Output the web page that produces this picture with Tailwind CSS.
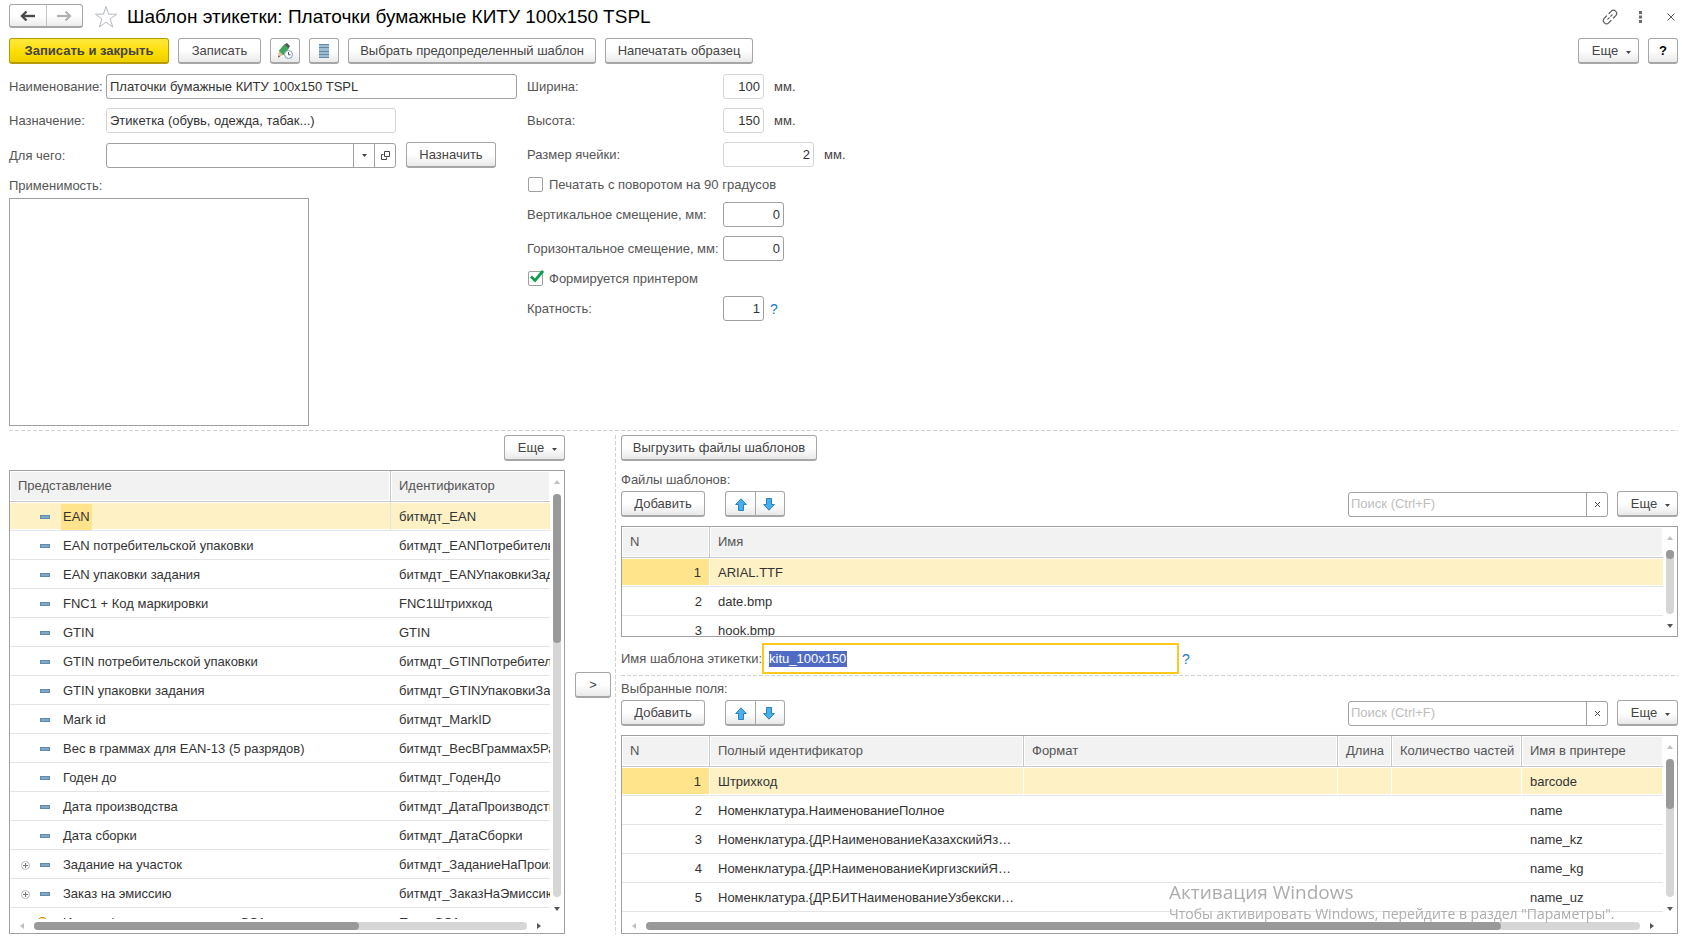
<!DOCTYPE html>
<html lang="ru">
<head>
  <meta charset="UTF-8">
  <title>Шаблон этикетки: Платочки бумажные КИТУ 100x150 TSPL</title>
  <script src="https://cdn.jsdelivr.net/npm/@tailwindcss/browser@4"></script>
</head>
<body class="bg-white text-[#333] text-[13px] leading-4 font-['Liberation_Sans',Arial,sans-serif]">
<div class="h-screen flex flex-col px-[9px] pr-[7px] pt-1 pb-[7px] overflow-hidden [&_button]:cursor-pointer [&_button]:pt-px">

  <!-- Заголовок формы -->
  <header class="flex items-center h-6">
    <div class="flex h-6 w-[74px] border border-[#a6a6a6] border-b-2 rounded-[3px] bg-linear-to-b from-white from-50% to-[#ececec]">
      <button type="button" aria-label="Назад" class="flex-1 flex items-center justify-center border-r border-[#c4c4c4]">
        <svg class="w-4 h-3" viewBox="0 0 16 12" fill="none" stroke="#4a4a4a" stroke-width="2.4"><path d="M2 6h13"/><path d="M6.500 1.500 2 6l4.500 4.500"/></svg>
      </button>
      <button type="button" aria-label="Вперед" class="flex-1 flex items-center justify-center">
        <svg class="w-4 h-3" viewBox="0 0 16 12" fill="none" stroke="#b0b0b0" stroke-width="2.2"><path d="M1 6h13"/><path d="M9.500 1.500 14 6l-4.500 4.500"/></svg>
      </button>
    </div>
    <button type="button" aria-label="В избранное" class="ml-[11px]">
      <svg class="w-6 h-6" viewBox="0 0 24 24" fill="none" stroke="#b4b9be" stroke-width="1"><path d="M12 1.500 14.600 9.200H22.600L16.200 13.900 18.700 22 12 17.200 5.300 22 7.800 13.900 1.400 9.200H9.400Z"/></svg>
    </button>
    <h1 class="ml-[9px] pt-0.5 flex-1 text-[19px] leading-6 text-black whitespace-nowrap">Шаблон этикетки: Платочки бумажные КИТУ 100x150 TSPL</h1>
    <div class="flex items-center">
      <button type="button" aria-label="Ссылка">
        <svg class="w-4 h-4" viewBox="0 0 16 16" fill="none" stroke="#5a5a5a" stroke-width="1.200" stroke-linecap="round"><path d="M7 4.500 9.600 1.900a2.600 2.600 0 0 1 3.700 0l.7.7a2.600 2.600 0 0 1 0 3.700L11.500 9"/><path d="M9 11.500 6.400 14.100a2.600 2.600 0 0 1-3.700 0l-.7-.7a2.600 2.600 0 0 1 0-3.700L4.500 7"/><path d="m5.800 10.200 1.400-1.400M8.800 7.200l1.400-1.400"/></svg>
      </button>
      <button type="button" aria-label="Меню" class="ml-[19px]">
        <svg class="w-[7px] h-3" viewBox="0 0 7 12" fill="#6a6a6a"><path d="M2 0h3v3H2zM2 4.500h3v3H2zM2 9h3v3H2z"/></svg>
      </button>
      <button type="button" aria-label="Закрыть" class="ml-[23px] mr-[3px]">
        <svg class="w-2 h-2" viewBox="0 0 8 8" stroke="#5a5a5a"><path d="m.5.5 7 7M7.500.5l-7 7"/></svg>
      </button>
    </div>
  </header>

  <!-- Командная панель -->
  <div class="mt-2.5 flex gap-[9px] [&>button]:h-[26px] [&>button]:rounded-[3px] [&>button]:border [&>button]:border-b-2 [&>button]:whitespace-nowrap [&>button]:flex [&>button]:items-center [&>button]:justify-center text-[#444]">
    <button type="button" class="w-40 border-[#b89b00] bg-linear-to-b from-[#ffe83a] via-[#ffe000] to-[#edcf00] font-bold">Записать и закрыть</button>
    <button type="button" class="w-[83px] border-[#a6a6a6] bg-linear-to-b from-white from-50% to-[#e9e9e9]">Записать</button>
    <button type="button" aria-label="Изменить" class="w-[30px] border-[#a6a6a6] bg-linear-to-b from-white from-50% to-[#e9e9e9]">
      <svg class="w-4 h-4" viewBox="0 0 16 16"><path d="M7.500 1.500 10 0l3 3-1.500 2.500Z" fill="#555"/><path d="m7.500 1.500 4 4-5.500 6.500L2 8Z" fill="#3fa65a" stroke="#2b8444" stroke-width=".6"/><path d="m2 8 4 4-5 2.500Z" fill="#e3bb96"/><path d="m1 14.500.5-2 1.500 1.200Z" fill="#444"/><circle cx="11.500" cy="11.500" r="4" fill="#fff" stroke="#7d98ad"/><path d="M11.500 9v2.800h2" fill="none" stroke="#456"/></svg>
    </button>
    <button type="button" aria-label="Список" class="w-[30px] border-[#a6a6a6] bg-linear-to-b from-white from-50% to-[#e9e9e9]">
      <svg class="w-4 h-4" viewBox="0 0 16 16"><path d="M3 1h10v14H3z" fill="#9dbdd5"/><path d="M3 1.500h10M3 4.500h10M3 8.500h10M3 11.500h10M3 14.500h10" stroke="#6489a6"/></svg>
    </button>
    <button type="button" class="w-[248px] border-[#a6a6a6] bg-linear-to-b from-white from-50% to-[#e9e9e9]">Выбрать предопределенный шаблон</button>
    <button type="button" class="w-[148px] border-[#a6a6a6] bg-linear-to-b from-white from-50% to-[#e9e9e9]">Напечатать образец</button>
    <button type="button" class="ml-auto w-[61px] pl-1.5 gap-2 border-[#a6a6a6] bg-linear-to-b from-white from-50% to-[#e9e9e9]">Еще <svg class="w-[5px] h-[3px] mt-0.5" viewBox="0 0 5 3" fill="#444"><path d="M0 0h5L2.500 3z"/></svg></button>
    <button type="button" class="w-[30px] border-[#a6a6a6] bg-linear-to-b from-white from-50% to-[#e9e9e9] font-bold text-black">?</button>
  </div>

  <!-- Реквизиты -->
  <div class="mt-2.5 flex gap-2.5 text-[#555]">
    <div class="w-[508px] flex flex-col gap-[9px]">
      <div class="flex items-center">
        <label for="name" class="w-[97px]">Наименование:</label>
        <input id="name" type="text" value="Платочки бумажные КИТУ 100x150 TSPL" class="flex-1 h-[25px] px-[3px] border border-[#a0a0a0] rounded-[3px] text-[#333]">
      </div>
      <div class="flex items-center">
        <label for="purpose" class="w-[97px]">Назначение:</label>
        <input id="purpose" type="text" readonly value="Этикетка (обувь, одежда, табак...)" class="w-[290px] h-[25px] px-[3px] border border-[#d4d4d4] rounded-[3px] text-[#333]">
      </div>
      <div class="flex items-center">
        <label for="target" class="w-[97px] pt-px">Для чего:</label>
        <div class="w-[290px] h-[25px] flex border border-[#a0a0a0] rounded-[3px]">
          <input id="target" type="text" class="flex-1 min-w-0 px-[3px] text-[#333]">
          <button type="button" aria-label="Выбрать" class="w-[21px] border-l border-[#a0a0a0] flex items-center justify-center"><svg class="w-[5px] h-[3px]" viewBox="0 0 5 3" fill="#444"><path d="M0 0h5L2.500 3z"/></svg></button>
          <button type="button" aria-label="Открыть" class="w-[21px] border-l border-[#a0a0a0] flex items-center justify-center"><svg class="w-[9px] h-[9px]" viewBox="0 0 9 9" fill="none" stroke="#444"><path d="M3.500.5h5v5h-5z"/><path d="M2.500 3.500h-2v5h5v-2"/></svg></button>
        </div>
        <button type="button" class="ml-2.5 w-[90px] h-[26px] border border-b-2 border-[#a6a6a6] rounded-[3px] bg-linear-to-b from-white from-50% to-[#e9e9e9] text-[#444]">Назначить</button>
      </div>
      <div class="flex flex-col">
        <label for="usage" class="h-[21px] pt-px">Применимость:</label>
        <textarea id="usage" class="w-[300px] h-[228px] border border-[#a0a0a0] resize-none"></textarea>
      </div>
    </div>

    <div class="flex flex-col gap-[9px]">
      <div class="flex items-center">
        <label for="width" class="w-[196px]">Ширина:</label>
        <input id="width" type="text" readonly value="100" class="w-[41px] h-[25px] px-[3px] text-right border border-[#d4d4d4] rounded-[3px] text-[#333]">
        <span class="ml-2.5 text-[#444]">мм.</span>
      </div>
      <div class="flex items-center">
        <label for="height" class="w-[196px]">Высота:</label>
        <input id="height" type="text" readonly value="150" class="w-[41px] h-[25px] px-[3px] text-right border border-[#d4d4d4] rounded-[3px] text-[#333]">
        <span class="ml-2.5 text-[#444]">мм.</span>
      </div>
      <div class="flex items-center">
        <label for="cell" class="w-[196px]">Размер ячейки:</label>
        <input id="cell" type="text" readonly value="2" class="w-[91px] h-[25px] px-[3px] text-right border border-[#d4d4d4] rounded-[3px] text-[#333]">
        <span class="ml-2.5 text-[#444]">мм.</span>
      </div>
      <label class="flex items-center h-[17px] pl-px gap-1.5">
        <input type="checkbox" class="appearance-none size-[15px] border border-[#a0a0a0] rounded-[2px]">
        Печатать с поворотом на 90 градусов
      </label>
      <div class="flex items-center">
        <label for="dy" class="w-[196px]">Вертикальное смещение, мм:</label>
        <input id="dy" type="text" value="0" class="w-[61px] h-[25px] px-[3px] text-right border border-[#a0a0a0] rounded-[3px] text-[#333]">
      </div>
      <div class="flex items-center">
        <label for="dx" class="w-[196px] whitespace-nowrap">Горизонтальное смещение, мм:</label>
        <input id="dx" type="text" value="0" class="w-[61px] h-[25px] px-[3px] text-right border border-[#a0a0a0] rounded-[3px] text-[#333]">
      </div>
      <label class="relative flex items-center h-[17px] pl-px gap-1.5">
        <input type="checkbox" checked class="peer appearance-none size-[15px] border border-[#a0a0a0] rounded-[2px]">
        <svg class="hidden peer-checked:block absolute left-[3px] top-0 w-[14px] h-[13px]" viewBox="0 0 14 13" fill="none" stroke="#0f9d4c" stroke-width="2.800"><path d="m1 6.500 4 4L13 1"/></svg>
        Формируется принтером
      </label>
      <div class="flex items-center">
        <label for="ratio" class="w-[196px]">Кратность:</label>
        <input id="ratio" type="text" value="1" class="w-[41px] h-[25px] px-[3px] text-right border border-[#a0a0a0] rounded-[3px] text-[#333]">
        <a href="#" class="ml-1.5 text-sm text-[#1a7bbf]">?</a>
      </div>
    </div>
  </div>

  <div class="mt-1 h-px shrink-0 bg-[repeating-linear-gradient(90deg,#d2d2d2_0_4px,transparent_4px_6px)]"></div>

  <div class="mt-1 flex-1 min-h-0 flex">

    <!-- Доступные поля -->
    <section class="w-[556px] flex flex-col">
      <button type="button" class="self-end w-[61px] h-[26px] pl-1.5 flex items-center justify-center gap-2 border border-b-2 border-[#a6a6a6] rounded-[3px] bg-linear-to-b from-white from-50% to-[#e9e9e9] text-[#444]">Еще <svg class="w-[5px] h-[3px] mt-0.5" viewBox="0 0 5 3" fill="#444"><path d="M0 0h5L2.500 3z"/></svg></button>
      <div class="mt-[9px] flex-1 min-h-0 flex flex-col border border-[#a0a0a0]">
        <div class="flex-1 min-h-0 flex">
          <div class="flex-1 min-w-0 overflow-hidden">
            <table class="w-full table-fixed border-separate border-spacing-0 whitespace-nowrap [&_th]:h-[31px] [&_th]:px-2 [&_th]:text-left [&_th]:font-normal [&_th]:text-[#555] [&_th]:bg-[#f2f2f2] [&_th]:border-b [&_th]:border-[#c8c8c8] [&_th]:shadow-[inset_0_0_0_1px_#fff] [&_td]:h-[29px] [&_td]:pt-0.5 [&_td]:border-b [&_td]:border-[#e4e4e4] [&_td+td]:pl-2 [&_td+td]:overflow-hidden">
              <colgroup><col class="w-[381px]"><col></colgroup>
              <thead><tr><th class="border-r">Представление</th><th>Идентификатор</th></tr></thead>
              <tbody>
                <tr class="[&>td]:bg-[#fdf1c5] [&>td]:shadow-[inset_0_1px_0_#fff,inset_0_-1px_0_#fff]"><td class="border-r border-r-white"><div class="flex items-center pl-[30px]"><i class="w-2.5 h-1 mr-[11px] border border-[#5f8cae] bg-[#7fa8c6]"></i><span class="px-0.5 leading-[26px] bg-[#ffe48c]">EAN</span></div></td><td>битмдт_EAN</td></tr>
                <tr><td><div class="flex items-center pl-[30px]"><i class="w-2.5 h-1 mr-[13px] border border-[#5f8cae] bg-[#7fa8c6]"></i>EAN потребительской упаковки</div></td><td>битмдт_EANПотребительскойУпаковки</td></tr>
                <tr><td><div class="flex items-center pl-[30px]"><i class="w-2.5 h-1 mr-[13px] border border-[#5f8cae] bg-[#7fa8c6]"></i>EAN упаковки задания</div></td><td>битмдт_EANУпаковкиЗадания</td></tr>
                <tr><td><div class="flex items-center pl-[30px]"><i class="w-2.5 h-1 mr-[13px] border border-[#5f8cae] bg-[#7fa8c6]"></i>FNC1 + Код маркировки</div></td><td>FNC1Штрихкод</td></tr>
                <tr><td><div class="flex items-center pl-[30px]"><i class="w-2.5 h-1 mr-[13px] border border-[#5f8cae] bg-[#7fa8c6]"></i>GTIN</div></td><td>GTIN</td></tr>
                <tr><td><div class="flex items-center pl-[30px]"><i class="w-2.5 h-1 mr-[13px] border border-[#5f8cae] bg-[#7fa8c6]"></i>GTIN потребительской упаковки</div></td><td>битмдт_GTINПотребительскойУпаковки</td></tr>
                <tr><td><div class="flex items-center pl-[30px]"><i class="w-2.5 h-1 mr-[13px] border border-[#5f8cae] bg-[#7fa8c6]"></i>GTIN упаковки задания</div></td><td>битмдт_GTINУпаковкиЗадания</td></tr>
                <tr><td><div class="flex items-center pl-[30px]"><i class="w-2.5 h-1 mr-[13px] border border-[#5f8cae] bg-[#7fa8c6]"></i>Mark id</div></td><td>битмдт_MarkID</td></tr>
                <tr><td><div class="flex items-center pl-[30px]"><i class="w-2.5 h-1 mr-[13px] border border-[#5f8cae] bg-[#7fa8c6]"></i>Вес в граммах для EAN-13 (5 разрядов)</div></td><td>битмдт_ВесВГраммах5Разрядов</td></tr>
                <tr><td><div class="flex items-center pl-[30px]"><i class="w-2.5 h-1 mr-[13px] border border-[#5f8cae] bg-[#7fa8c6]"></i>Годен до</div></td><td>битмдт_ГоденДо</td></tr>
                <tr><td><div class="flex items-center pl-[30px]"><i class="w-2.5 h-1 mr-[13px] border border-[#5f8cae] bg-[#7fa8c6]"></i>Дата производства</div></td><td>битмдт_ДатаПроизводства</td></tr>
                <tr><td><div class="flex items-center pl-[30px]"><i class="w-2.5 h-1 mr-[13px] border border-[#5f8cae] bg-[#7fa8c6]"></i>Дата сборки</div></td><td>битмдт_ДатаСборки</td></tr>
                <tr><td><div class="flex items-center pl-[11px]"><svg class="w-[9px] h-[9px] mr-2.5" viewBox="0 0 9 9" fill="none"><circle cx="4.500" cy="4.500" r="4" stroke="#bbb"/><path d="M2 4.500h5M4.500 2v5" stroke="#777"/></svg><i class="w-2.5 h-1 mr-[13px] border border-[#5f8cae] bg-[#7fa8c6]"></i>Задание на участок</div></td><td>битмдт_ЗаданиеНаПроизводство</td></tr>
                <tr><td><div class="flex items-center pl-[11px]"><svg class="w-[9px] h-[9px] mr-2.5" viewBox="0 0 9 9" fill="none"><circle cx="4.500" cy="4.500" r="4" stroke="#bbb"/><path d="M2 4.500h5M4.500 2v5" stroke="#777"/></svg><i class="w-2.5 h-1 mr-[13px] border border-[#5f8cae] bg-[#7fa8c6]"></i>Заказ на эмиссию</div></td><td>битмдт_ЗаказНаЭмиссию</td></tr>
                <tr><td><div class="flex items-center pl-[11px]"><svg class="w-[9px] h-[9px] mr-2" viewBox="0 0 9 9" fill="none"><circle cx="4.500" cy="4.500" r="4" stroke="#bbb"/><path d="M2 4.500h5M4.500 2v5" stroke="#777"/></svg><svg class="w-[15px] h-3 mr-2.5" viewBox="0 0 15 12"><path d="M.5 11.500v-9l2-2h4l2 2h6v9z" fill="#ffd766" stroke="#c8922f"/></svg>Идентификатор применения GS1</div></td><td>Поле GS1</td></tr>
              </tbody>
            </table>
          </div>
          <div class="w-[14px] flex flex-col items-center pt-[9px] pb-2">
            <svg class="w-1.5 h-1" viewBox="0 0 6 4" fill="#c0c0c0"><path d="M0 4h6L3 0z"/></svg>
            <div class="my-2.5 flex-1 w-2 rounded-full bg-[#d6d6d6]"><div class="h-[37%] rounded-full bg-[#999]"></div></div>
            <svg class="w-1.5 h-1" viewBox="0 0 6 4" fill="#555"><path d="M0 0h6L3 4z"/></svg>
          </div>
        </div>
        <div class="h-[14px] flex items-center pl-2.5 pr-[23px] gap-2.5">
          <svg class="w-1 h-1.5" viewBox="0 0 4 6" fill="#c0c0c0"><path d="M4 0v6L0 3z"/></svg>
          <div class="flex-1 h-2 rounded-full bg-[#d6d6d6]"><div class="w-[66%] h-2 rounded-full bg-[#999]"></div></div>
          <svg class="w-1 h-1.5" viewBox="0 0 4 6" fill="#555"><path d="M0 0v6l4-3z"/></svg>
        </div>
      </div>
    </section>

    <div class="px-2.5 pr-1 flex items-center">
      <button type="button" class="w-9 h-[26px] border border-b-2 border-[#a6a6a6] rounded-[3px] bg-linear-to-b from-white from-50% to-[#e9e9e9] text-[#444]">&gt;</button>
    </div>
    <div class="w-px bg-[repeating-linear-gradient(180deg,#d2d2d2_0_4px,transparent_4px_6px)]"></div>

    <div class="ml-[5px] flex-1 min-w-0 flex flex-col">
      <button type="button" class="self-start w-[196px] h-[26px] shrink-0 border border-b-2 border-[#a6a6a6] rounded-[3px] bg-linear-to-b from-white from-50% to-[#e9e9e9] text-[#444]">Выгрузить файлы шаблонов</button>

      <!-- Файлы шаблонов -->
      <h2 class="mt-[11px] text-[#555]">Файлы шаблонов:</h2>
      <div class="mt-[3px] flex items-center text-[#444]">
        <button type="button" class="w-[84px] h-[26px] border border-b-2 border-[#a6a6a6] rounded-[3px] bg-linear-to-b from-white from-50% to-[#e9e9e9]">Добавить</button>
        <div class="ml-5 w-[60px] h-[26px] flex border border-b-2 border-[#a6a6a6] rounded-[3px] bg-linear-to-b from-white from-50% to-[#e9e9e9]">
          <button type="button" aria-label="Вверх" class="w-[30px] flex items-center justify-center border-r border-[#a6a6a6]"><svg class="w-3 h-[13px]" viewBox="0 0 12 13" fill="#45b0ee" stroke="#2f7fb5"><path d="M6 .8 11.300 6.500H8.500v6h-5v-6H.7z"/></svg></button>
          <button type="button" aria-label="Вниз" class="w-[26px] flex items-center justify-center"><svg class="w-3 h-[13px]" viewBox="0 0 12 13" fill="#45b0ee" stroke="#2f7fb5"><path d="M6 12.200.7 6.500h2.800v-6h5v6h2.800z"/></svg></button>
        </div>
        <div class="ml-auto w-[260px] h-[25px] flex border border-[#a0a0a0] rounded-[3px]">
          <input type="search" aria-label="Поиск файлов" placeholder="Поиск (Ctrl+F)" class="flex-1 min-w-0 px-0.5 placeholder:text-[#bdbdbd]">
          <button type="button" aria-label="Очистить" class="w-[21px] border-l border-[#a0a0a0] flex items-center justify-center"><svg class="w-[5px] h-[5px]" viewBox="0 0 5 5" stroke="#444"><path d="m0 0 5 5M5 0 0 5"/></svg></button>
        </div>
        <button type="button" class="ml-[9px] w-[61px] h-[26px] pl-1.5 flex items-center justify-center gap-2 border border-b-2 border-[#a6a6a6] rounded-[3px] bg-linear-to-b from-white from-50% to-[#e9e9e9]">Еще <svg class="w-[5px] h-[3px] mt-0.5" viewBox="0 0 5 3" fill="#444"><path d="M0 0h5L2.500 3z"/></svg></button>
      </div>
      <div class="mt-[9px] h-[111px] shrink-0 flex border border-[#a0a0a0]">
        <div class="flex-1 min-w-0 overflow-hidden">
          <table class="w-full table-fixed border-separate border-spacing-0 whitespace-nowrap [&_th]:h-[31px] [&_th]:px-2 [&_th]:text-left [&_th]:font-normal [&_th]:text-[#555] [&_th]:bg-[#f2f2f2] [&_th]:border-b [&_th]:border-[#c8c8c8] [&_th]:shadow-[inset_0_0_0_1px_#fff] [&_td]:h-[29px] [&_td]:pt-0.5 [&_td]:px-2 [&_td]:border-b [&_td]:border-[#e4e4e4] [&_td:first-child]:text-right">
            <colgroup><col class="w-[88px]"><col></colgroup>
            <thead><tr><th class="border-r">N</th><th>Имя</th></tr></thead>
            <tbody>
              <tr class="[&>td]:bg-[#fdf1c5] [&>td]:shadow-[inset_0_1px_0_#fff,inset_0_-1px_0_#fff] [&>td:first-child]:bg-[#ffe48c] [&>td:first-child]:border-r [&>td:first-child]:border-r-white"><td>1</td><td>ARIAL.TTF</td></tr>
              <tr><td>2</td><td>date.bmp</td></tr>
              <tr><td>3</td><td>hook.bmp</td></tr>
            </tbody>
          </table>
        </div>
        <div class="w-[14px] flex flex-col items-center pt-[9px] pb-2">
          <svg class="w-1.5 h-1" viewBox="0 0 6 4" fill="#c0c0c0"><path d="M0 4h6L3 0z"/></svg>
          <div class="my-2.5 flex-1 w-2 rounded-full bg-[#d6d6d6]"><div class="h-[9px] rounded-full bg-[#999]"></div></div>
          <svg class="w-1.5 h-1" viewBox="0 0 6 4" fill="#555"><path d="M0 0h6L3 4z"/></svg>
        </div>
      </div>

      <div class="mt-1.5 flex items-center">
        <label for="template" class="w-[141px] whitespace-nowrap text-[#555]">Имя шаблона этикетки:</label>
        <div class="w-[417px] h-[31px] flex items-center pl-[5px] border-2 border-[#fbca1c]">
          <input id="template" type="text" value="kitu_100x150" class="w-[78px] h-4 bg-[#4f6bc4] text-white outline-none">
        </div>
        <a href="#" class="ml-[3px] text-sm text-[#1a7bbf]">?</a>
      </div>
      <div class="mt-px h-px shrink-0 bg-[repeating-linear-gradient(90deg,#d2d2d2_0_4px,transparent_4px_6px)]"></div>

      <!-- Выбранные поля -->
      <h2 class="mt-[5px] text-[#555]">Выбранные поля:</h2>
      <div class="mt-[3px] flex items-center text-[#444]">
        <button type="button" class="w-[84px] h-[26px] border border-b-2 border-[#a6a6a6] rounded-[3px] bg-linear-to-b from-white from-50% to-[#e9e9e9]">Добавить</button>
        <div class="ml-5 w-[60px] h-[26px] flex border border-b-2 border-[#a6a6a6] rounded-[3px] bg-linear-to-b from-white from-50% to-[#e9e9e9]">
          <button type="button" aria-label="Вверх" class="w-[30px] flex items-center justify-center border-r border-[#a6a6a6]"><svg class="w-3 h-[13px]" viewBox="0 0 12 13" fill="#45b0ee" stroke="#2f7fb5"><path d="M6 .8 11.300 6.500H8.500v6h-5v-6H.7z"/></svg></button>
          <button type="button" aria-label="Вниз" class="w-[26px] flex items-center justify-center"><svg class="w-3 h-[13px]" viewBox="0 0 12 13" fill="#45b0ee" stroke="#2f7fb5"><path d="M6 12.200.7 6.500h2.800v-6h5v6h2.800z"/></svg></button>
        </div>
        <div class="ml-auto w-[260px] h-[25px] flex border border-[#a0a0a0] rounded-[3px]">
          <input type="search" aria-label="Поиск полей" placeholder="Поиск (Ctrl+F)" class="flex-1 min-w-0 px-0.5 placeholder:text-[#bdbdbd]">
          <button type="button" aria-label="Очистить" class="w-[21px] border-l border-[#a0a0a0] flex items-center justify-center"><svg class="w-[5px] h-[5px]" viewBox="0 0 5 5" stroke="#444"><path d="m0 0 5 5M5 0 0 5"/></svg></button>
        </div>
        <button type="button" class="ml-[9px] w-[61px] h-[26px] pl-1.5 flex items-center justify-center gap-2 border border-b-2 border-[#a6a6a6] rounded-[3px] bg-linear-to-b from-white from-50% to-[#e9e9e9]">Еще <svg class="w-[5px] h-[3px] mt-0.5" viewBox="0 0 5 3" fill="#444"><path d="M0 0h5L2.500 3z"/></svg></button>
      </div>
      <div class="mt-[9px] flex-1 min-h-0 flex flex-col border border-[#a0a0a0]">
        <div class="flex-1 min-h-0 flex">
          <div class="flex-1 min-w-0 overflow-hidden">
            <table class="w-full table-fixed border-separate border-spacing-0 whitespace-nowrap [&_th]:h-[31px] [&_th]:px-2 [&_th]:text-left [&_th]:font-normal [&_th]:text-[#555] [&_th]:bg-[#f2f2f2] [&_th]:border-b [&_th]:border-r [&_th]:border-[#c8c8c8] [&_th:last-child]:border-r-0 [&_th]:shadow-[inset_0_0_0_1px_#fff] [&_td]:h-[29px] [&_td]:pt-0.5 [&_td]:px-2 [&_td]:border-b [&_td]:border-[#e4e4e4] [&_td:first-child]:text-right">
              <colgroup><col class="w-[88px]"><col class="w-[314px]"><col><col class="w-[54px]"><col class="w-[130px]"><col class="w-[141px]"></colgroup>
              <thead><tr><th>N</th><th>Полный идентификатор</th><th>Формат</th><th>Длина</th><th>Количество частей</th><th>Имя в принтере</th></tr></thead>
              <tbody>
                <tr class="[&>td]:bg-[#fdf1c5] [&>td]:border-r [&>td]:border-r-white [&>td]:shadow-[inset_0_1px_0_#fff,inset_0_-1px_0_#fff] [&>td:first-child]:bg-[#ffe48c]"><td>1</td><td>Штрихкод</td><td></td><td></td><td></td><td>barcode</td></tr>
                <tr><td>2</td><td>Номенклатура.НаименованиеПолное</td><td></td><td></td><td></td><td>name</td></tr>
                <tr><td>3</td><td>Номенклатура.{ДР.НаименованиеКазахскийЯз…</td><td></td><td></td><td></td><td>name_kz</td></tr>
                <tr><td>4</td><td>Номенклатура.{ДР.НаименованиеКиргизскийЯ…</td><td></td><td></td><td></td><td>name_kg</td></tr>
                <tr><td>5</td><td>Номенклатура.{ДР.БИТНаименованиеУзбекски…</td><td></td><td></td><td></td><td>name_uz</td></tr>
              </tbody>
            </table>
          </div>
          <div class="w-[14px] flex flex-col items-center pt-[9px] pb-2">
            <svg class="w-1.5 h-1" viewBox="0 0 6 4" fill="#c0c0c0"><path d="M0 4h6L3 0z"/></svg>
            <div class="my-2.5 flex-1 w-2 rounded-full bg-[#d6d6d6]"><div class="h-[36%] rounded-full bg-[#999]"></div></div>
            <svg class="w-1.5 h-1" viewBox="0 0 6 4" fill="#555"><path d="M0 0h6L3 4z"/></svg>
          </div>
        </div>
        <div class="h-[14px] flex items-center pl-2.5 pr-[23px] gap-2.5">
          <svg class="w-1 h-1.5" viewBox="0 0 4 6" fill="#c0c0c0"><path d="M4 0v6L0 3z"/></svg>
          <div class="flex-1 h-2 rounded-full bg-[#d6d6d6]"><div class="w-[86%] h-2 rounded-full bg-[#999]"></div></div>
          <svg class="w-1 h-1.5" viewBox="0 0 4 6" fill="#555"><path d="M0 0v6l4-3z"/></svg>
        </div>
      </div>
    </div>
  </div>
</div>

<!-- Системное уведомление поверх окна -->
<div class="fixed right-[62px] bottom-[17px] w-[454px] text-[#adadad] font-['Open_Sans',sans-serif] whitespace-nowrap pointer-events-none">
  <p class="text-[19px] leading-6">Активация Windows</p>
  <p class="text-sm leading-5">Чтобы активировать Windows, перейдите в раздел "Параметры".</p>
</div>
</body>
</html>
